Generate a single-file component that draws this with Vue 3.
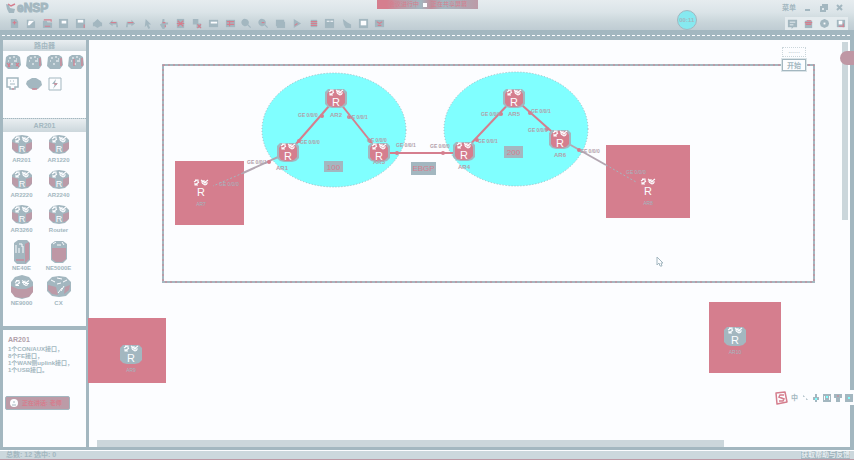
<script setup>
const tools = [
  { n: '新建', d: 'M2 1h6l2 3v7H2z', a: 'M4 5h4M6 3v4' },
  { n: '新建试卷', d: 'M2 2h7l2 2v7H2z', a: '' , w: 'M4 3h6L5 8H3z' },
  { n: '打开', d: 'M1 3h4l1 2h5v6H1z', a: 'M2 2h8v2M3 9h6' },
  { n: '保存', d: 'M1 1h10v10H1z', w: 'M4 3h5v3H4z' },
  { n: '另存为', d: 'M1 1h10v10H1z', w: 'M3 2h6v3H3z', a: 'M10 7v4' },
  { n: '打印', d: 'M6 1l4 4h1v4H9l-3 2-3-2H1V5h1z' },
  { n: '撤销', d: 'M1 6l4-4v2h5l1 6H9V7H5v2z', a: 'M3 5h6' },
  { n: '恢复', d: 'M11 6L7 2v2H2l-1 6h2V7h4v2z', a: 'M3 5h6' },
  { n: '选择', d: 'M4 1l6 6H7l2 4-2 1-2-4-2 2z' },
  { n: '拖动', d: 'M5 1h2v4h4v2H9l-2 5H5L2 7l2-1z', a: 'M5 5h3M8 8v2' },
  { n: '删除', d: 'M2 1h8v10H2z', a: 'M3 3l6 6M9 3L3 9M2 6h8' },
  { n: '删除连线', d: 'M2 1h6v5h3v5H6V7H2z', a: 'M7 7l4 4M11 7l-4 4' },
  { n: '文本', d: 'M1 2h10v8H1z', w: 'M3 4h7v2H3z' },
  { n: '调色板', d: 'M1 2h10v8H1z', a: 'M2 4h8M2 7h8M5 3v6' },
  { n: '放大', d: 'M5 1a4 4 0 013 6l3 3-1 1-3-3A4 4 0 115 1z' },
  { n: '缩小', d: 'M5 1a4 4 0 013 6l3 3-1 1-3-3A4 4 0 115 1z', a: 'M4 5h3' },
  { n: '重置缩放', d: 'M1 2h9v2h1v7H2V9H1z' },
  { n: '开启设备', d: 'M3 1l8 5-8 5z', a: 'M4 8l3-2' },
  { n: '停止设备', d: 'M3 2h7v8H3z', a: 'M3 4h7M3 6h7M3 8h7' },
  { n: '数据抓包', d: 'M1 1h10v10H1z', w: 'M3 3h3v1H3zM7 3h3v1H7z' },
  { n: '显示接口', d: 'M2 1l5 4 4 2v4H5L3 7z' },
  { n: '显示网格', d: 'M1 1h10v10H1z', w: 'M3 3h6v5H3z' },
  { n: '打开命令行', d: 'M1 2h10v8H1z', a: 'M3 4l3 2 3-2M4 8h4' }
]
const helpers = [
  { n: '论坛', d: 'M1 2h10v8H7l-2 2v-2H1z', w: 'M3 4h6v1H3zM3 7h4v1H3z' },
  { n: '官网', d: 'M2 3h8v8H2z', a: 'M2 5h8M4 3h5M3 7h6' },
  { n: '设置', d: 'M6 1l2 1 2 1 1 3-1 3-4 2-4-2-1-3 1-3 2-1z', w: 'M5 5h2v2H5z' },
  { n: '帮助', d: 'M2 2h9v8H2z', w: 'M4 3h4v4H4z', a: 'M4 9h6M9 6v4' }
]
const kinds = ['路由器', '交换机', '无线局域网', '防火墙']
const models = [
  ['AR201', 'router'], ['AR1220', 'router'], ['AR2220', 'router'], ['AR2240', 'router'],
  ['AR3260', 'router'], ['Router', 'router'], ['NE40E', 'chassis'], ['NE5000E', 'tower'],
  ['NE9000', 'drum'], ['CX', 'cx']
]
const zones = [
  [175, 161, 69, 64], [606, 145, 84, 73], [709, 302, 72, 71], [88, 318, 78, 65]
]
const links = [
  [289, 152, 336, 98], [336, 98, 379, 152], [379, 153, 464, 153],
  [464, 151, 514, 98], [514, 98, 560, 139]
]
const grayLinks = [[289, 152, 243, 173], [560, 139, 606, 165]]
const nodes = [
  [336, 98, 'AR2', 336, 117], [288, 152, 'AR1', 282, 170], [379, 152, 'AR3', 379, 164],
  [464, 151, 'AR4', 464, 169], [514, 98, 'AR5', 514, 116], [560, 139, 'AR6', 560, 157]
]
const bare = [[201, 188, 'AR7'], [648, 187, 'AR8']]
const idle = [[131, 354, 'AR9'], [735, 336, 'AR10']]
const ports = [
  [298, 117, 'GE 0/0/0'], [348, 119, 'GE 0/0/1'], [300, 144, 'GE 0/0/0'], [367, 142, 'GE 0/0/0'],
  [247, 164, 'GE 0/0/1'], [396, 147, 'GE 0/0/1'], [430, 148, 'GE 0/0/0'], [481, 116, 'GE 0/0/0'],
  [531, 113, 'GE 0/0/1'], [478, 143, 'GE 0/0/1'], [528, 132, 'GE 0/0/0'], [580, 153, 'GE 0/0/0']
]
const joints = [[322, 116], [349, 117], [299, 141], [370, 141], [269, 162], [397, 153], [443, 153], [501, 114], [530, 113], [477, 140], [547, 129], [579, 150]]
const tags = [[324, 161, 19, 11, '100'], [504, 146, 19, 12, '200'], [411, 162, 25, 13, 'EBGP']]
</script>

<template>
  <div class="app">
    <svg class="defs" aria-hidden="true">
      <symbol id="arrows" viewBox="0 0 16 7">
        <path d="M1 3l3-2M2 1h3v2M6 3l-4 3M2 4v2h3M8 1l3 2M8 3h3V1M15 1l-4 3M15 4h-4M9 4l3 2M14 5l-2 1" fill="none" stroke="#fcfdff" stroke-width="1.1" />
      </symbol>
      <symbol id="node" viewBox="0 0 22 20">
        <path d="M3 1h16l3 3v12l-3 3-4 1H7l-4-1-3-3V4z" fill="var(--edge)" />
        <path d="M4 3l4-1h6l4 1 2 3v9l-3 3-5 1H9l-5-1-2-3V6z" fill="var(--face)" />
        <use href="#arrows" x="3" y="1" width="16" height="7" />
      </symbol>
      <symbol id="router" viewBox="0 0 22 20">
        <path d="M1 5l4-4 6-1 6 1 4 4v9l-4 4-6 1-6-1-4-4z" fill="#a3b7c0" />
        <path d="M1 7l6 2v8l-4-1-2-3zM21 7l-6 2v8l4-1 2-3z" fill="#d57e8e" opacity=".48" />
        <use href="#arrows" x="3" y="1" width="16" height="7" />
      </symbol>
      <symbol id="chassis" viewBox="0 0 22 24">
        <path d="M3 3l4-3h9l3 3v17l-4 4H6l-3-3z" fill="#a3b7c0" />
        <path d="M14 4l4-2v17l-4 4zM5 19h8v2H5z" fill="#d57e8e" opacity=".55" />
        <path d="M5 5v8M8 4h3v3M8 8v5M12 6v7" fill="none" stroke="#fcfdff" />
      </symbol>
      <symbol id="tower" viewBox="0 0 22 24">
        <path d="M3 4l4-3h8l4 3v15l-4 4H7l-4-3z" fill="#a3b7c0" />
        <path d="M4 8h14v11l-4 3H8l-4-3z" fill="#d57e8e" opacity=".55" />
        <path d="M5 4l3-2M9 5h4M14 2l2 3" stroke="#fcfdff" />
      </symbol>
      <symbol id="drum" viewBox="0 0 22 24">
        <path d="M0 7l4-5 7-2 7 2 4 5v10l-4 5-7 2-7-2-4-5z" fill="#a3b7c0" />
        <path d="M0 11l7 3h8l7-3v6l-4 5-7 1-7-1-4-5z" fill="#d57e8e" opacity=".52" />
        <use href="#arrows" x="3" y="4" width="16" height="8" />
      </symbol>
      <symbol id="cx" viewBox="0 0 24 24">
        <path d="M0 7l5-5 7-1 7 1 5 5v9l-5 5-7 1-7-1-5-5z" fill="#a3b7c0" />
        <path d="M1 10l8 2 2 8-6-1-4-4zM23 10l-5 2-1 7 5-4z" fill="#d57e8e" opacity=".5" />
        <path d="M4 5l4 2M10 3l5 1M16 7l4-2M10 9l4-1M17 11l-3 5M15 13l-4 5" fill="none" stroke="#fcfdff" />
      </symbol>
      <symbol id="mini" viewBox="0 0 16 14">
        <path d="M1 2l3-2h8l3 2 1 8-3 4H3l-3-3z" fill="#a3b7c0" />
        <path d="M4 3h2M8 2h2M11 4h1M3 6h1M9 6h3M6 9h2" stroke="#fcfdff" />
      </symbol>
    </svg>

    <header class="head">
      <div class="title">
        <svg class="logo" viewBox="0 0 10 10"><path d="M0 1l3 1 1 3 5 1-1 4H3L1 6z" fill="#a3b7c0" /><path d="M2 1l3 2 4-2" fill="none" stroke="#d57e8e" stroke-width="1.5" /></svg>
        <span class="brand">eNSP</span>
        <div class="wins">
          <button class="menu">菜单</button>
          <button aria-label="最小化"><svg viewBox="0 0 8 8"><path d="M1 6h5" /></svg></button>
          <button aria-label="最大化"><svg viewBox="0 0 8 8"><path d="M1 3h4v4H1zM3 3V1h4v4H5" /></svg></button>
          <button aria-label="关闭"><svg viewBox="0 0 8 8"><path d="M1 1l5 5M6 1L1 6" /></svg></button>
        </div>
      </div>
      <div class="bar">
        <div class="tools">
          <button v-for="t in tools" :key="t.n" :aria-label="t.n">
            <svg viewBox="0 0 12 12"><path :d="t.d" fill="#a3b7c0" /><path v-if="t.w" :d="t.w" fill="#fcfdff" /><path v-if="t.a" :d="t.a" class="acc" /></svg>
          </button>
        </div>
        <div class="help">
          <button v-for="t in helpers" :key="t.n" :aria-label="t.n">
            <svg viewBox="0 0 12 12"><path :d="t.d" fill="#a3b7c0" /><path v-if="t.w" :d="t.w" fill="#fcfdff" /><path v-if="t.a" :d="t.a" class="acc" /></svg>
          </button>
        </div>
      </div>
      <div class="rule"></div>
      <div class="meeting"><span>会议进行中</span><b></b><span>正在共享屏幕</span></div>
      <div class="orb">00:11</div>
    </header>

    <div class="body">
      <aside class="side">
        <h2 class="cap">路由器</h2>
        <div class="kinds">
          <button v-for="(k, i) in kinds" :key="k" :aria-label="k">
            <svg viewBox="0 0 16 14"><use href="#mini" /><path v-if="i === 0" d="M2 8l3 4M5 8l-2 4M11 8l3 4M14 8l-3 3" class="acc" /><path v-else-if="i === 3" d="M6 4v7M14 3v8" class="acc" /><path v-else d="M14 3v8" class="acc" /></svg>
          </button>
          <button aria-label="终端"><svg viewBox="0 0 16 14"><path d="M2 1h11v9h-3v2H5v-2H2z" fill="none" stroke="#a3b7c0" stroke-width="1.5" /><path d="M5 4h1M8 4h1M5 7h5" stroke="#a3b7c0" /><path d="M7 12h2" class="acc" /></svg></button>
          <button aria-label="其他设备"><svg viewBox="0 0 16 14"><path d="M1 4l5-3h4l5 3 1 4-4 4-4 1-5-2-3-4z" fill="#a3b7c0" /><path d="M6 12h5" class="acc" /></svg></button>
          <button aria-label="设备连线"><svg viewBox="0 0 16 14"><path d="M2 1h12v12H2z" fill="#fcfdff" stroke="#a3b7c0" /><path d="M9 2L5 7h3l-2 5 5-6H8z" fill="#a3b7c0" /><path d="M7 7h3" class="acc" /></svg></button>
        </div>
        <h3 class="cap sub">AR201</h3>
        <div class="models">
          <button v-for="m in models" :key="m[0]" :class="{ tall: m[1] !== 'router' }">
            <svg v-if="m[1] === 'router'" viewBox="0 0 22 20"><use href="#router" width="22" height="20" /><text x="11" y="17" class="mark">R</text></svg>
            <svg v-else><use :href="'#' + m[1]" /></svg>
            <span>{{ m[0] }}</span>
          </button>
        </div>
        <section class="info">
          <h4>AR201</h4>
          <p>1个CON/AUX接口，</p>
          <p>8个FE接口，</p>
          <p>1个WAN侧uplink接口，</p>
          <p>1个USB接口。</p>
          <div class="talk"><svg viewBox="0 0 8 8"><circle cx="4" cy="4" r="4" fill="#fcfdff" /><path d="M2 6h4M3 3h2" stroke="#a3b7c0" /></svg><span>正在讲话: 老师</span></div>
        </section>
      </aside>

      <main class="stage">
        <svg class="topo" width="755" height="400" viewBox="89 40 755 400">
          <rect x="163" y="65" width="651" height="217" class="frame" />
          <rect x="163" y="65" width="651" height="217" class="dots" />
          <ellipse cx="334" cy="130" rx="72" ry="57" class="area" />
          <ellipse cx="516" cy="129" rx="72" ry="57" class="area" />
          <rect v-for="z in zones" :key="z[0]" :x="z[0]" :y="z[1]" :width="z[2]" :height="z[3]" fill="#d57e8e" />
          <line v-for="(l, i) in links" :key="'l' + i" :x1="l[0]" :y1="l[1]" :x2="l[2]" :y2="l[3]" class="link" />
          <line v-for="(l, i) in grayLinks" :key="'g' + i" :x1="l[0]" :y1="l[1]" :x2="l[2]" :y2="l[3]" class="link gray" />
          <path d="M243 173l-30 13M606 165l30 17" class="faint" />
          <circle v-for="(j, i) in joints" :key="'j' + i" :cx="j[0]" :cy="j[1]" r="2" fill="#d57e8e" />
          <g v-for="n in nodes" :key="n[2]" class="on">
            <use href="#node" :x="n[0] - 11" :y="n[1] - 10" width="22" height="20" />
            <text :x="n[0]" :y="n[1] + 8" class="r">R</text>
            <text :x="n[3]" :y="n[4]" class="name">{{ n[2] }}</text>
          </g>
          <g v-for="n in bare" :key="n[2]">
            <use href="#arrows" :x="n[0] - 8" :y="n[1] - 9" width="16" height="7" />
            <text :x="n[0]" :y="n[1] + 8" class="r">R</text>
            <text :x="n[0]" :y="n[1] + 18" class="dim">{{ n[2] }}</text>
          </g>
          <g v-for="n in idle" :key="n[2]" class="off">
            <use href="#node" :x="n[0] - 11" :y="n[1] - 10" width="22" height="20" />
            <text :x="n[0]" :y="n[1] + 8" class="r">R</text>
            <text :x="n[0]" :y="n[1] + 18" class="dim">{{ n[2] }}</text>
          </g>
          <text v-for="(p, i) in ports" :key="'p' + i" :x="p[0]" :y="p[1]" class="port">{{ p[2] }}</text>
          <text x="219" y="186" class="port thin">GE 0/0/0</text>
          <text x="626" y="174" class="port thin">GE 0/0/0</text>
          <g v-for="t in tags" :key="t[4]">
            <rect :x="t[0]" :y="t[1]" :width="t[2]" :height="t[3]" fill="#a3b7c0" />
            <text :x="t[0] + t[2] / 2" :y="t[1] + 9" class="tag">{{ t[4] }}</text>
          </g>
          <path d="M657 257v8l2-2 1 3h2l-1-3h2z" fill="#fcfdff" stroke="#a3b7c0" />
        </svg>
        <div class="vbar"></div>
        <div class="hbar"><div class="thumb"></div></div>
        <div class="start"><span>......</span><button>开始</button></div>
        <div class="red"></div>
        <div class="ime">
          <svg class="s" viewBox="0 0 14 14"><path d="M2 2l9-1 2 10-10 2z" fill="#fcfdff" stroke="#d57e8e" stroke-width="1.5" stroke-linejoin="round" /><path d="M10 4H6L5 6l5 2-1 2H5" fill="none" stroke="#d57e8e" stroke-width="1.5" /></svg>
          <span>中</span>
          <svg viewBox="0 0 8 8"><path d="M2 2h1v1M5 5h1v1" class="fine" /></svg>
          <svg viewBox="0 0 8 8"><path d="M4 0v5M2 3v2h4V3M4 5v3" /><path d="M4 4v2" class="cy" /></svg>
          <svg viewBox="0 0 8 8"><path d="M0 1h8v6H0zM2 3h1M5 3h1M2 5h4" /><path d="M4 2v2" class="cy" /></svg>
          <svg viewBox="0 0 8 8"><path d="M1 1h6v2H5v4H3V3H1z" /><path d="M3 2h2" class="acc" /></svg>
          <svg viewBox="0 0 8 8"><path d="M1 1h2v2H1zM5 1h2v2H5zM1 5h2v2H1zM5 5h2v2H5z" /><path d="M3 4h2" class="cy" /></svg>
        </div>
      </main>
    </div>
    <footer class="status"><span>总数: 12 选中: 0</span><a href="#">获取帮助与反馈</a></footer>
  </div>
</template>

<style>
body { margin: 0; overflow: hidden; }
</style>
<style scoped>
.app { --g: #a3b7c0; --p: #d57e8e; --w: #fcfdff; --c: #80ffff; height: 100vh; display: flex; flex-direction: column; background: var(--w); color: var(--g); font-family: "Liberation Sans", "Noto Sans CJK SC", sans-serif; font-size: 7px; line-height: 7px; overflow: hidden; }
.app *, .app { box-sizing: border-box; }
.defs { position: absolute; width: 0; height: 0; }
button { border: 0; padding: 0; margin: 0; background: none; color: inherit; font: inherit; display: block; }
svg { display: block; }
h2, h3, h4, p { margin: 0; font: inherit; }
.acc { fill: none; stroke: #d57e8e; stroke-width: 1.2; }
.head { position: relative; flex: none; height: 40px; display: flex; flex-direction: column; background: linear-gradient(#e6ecef, #dbe4e8 12px, #c9d5da 22px, #bfccd3 30px); }
.title { display: flex; align-items: center; height: 15px; padding: 0 10px 0 6px; }
.logo { width: 10px; height: 10px; }
.brand { font-size: 12px; line-height: 14px; font-weight: bold; margin-left: 1px; -webkit-text-stroke: 1px var(--g); }
.wins { margin-left: auto; display: flex; align-items: center; gap: 8px; height: 9px; }
.wins svg { width: 8px; height: 8px; fill: none; stroke: var(--g); stroke-width: 2; }
.wins .menu { font-weight: bold; }
.bar { display: flex; justify-content: space-between; align-items: center; height: 17px; padding: 0 6px 0 8px; }
.tools { display: flex; justify-content: space-between; width: 45%; margin-top: -1px; }
.tools svg, .help svg { width: 11px; height: 11px; }
.tools button { width: 12px; height: 12px; display: grid; place-items: center; }
.help { display: flex; gap: 5px; padding: 1px 2px; background: #e4ebee; }
.rule { flex: 1; background: var(--g); display: flex; align-items: center; margin-top: -2px; }
.rule::after { content: ""; flex: 1; margin-left: 2px; margin-right: 4px; border-top: 1px dashed var(--w); }
.meeting { position: absolute; left: 44.15%; top: 0; width: 101px; height: 9px; display: flex; align-items: center; gap: 4px; padding: 0 12px; background: linear-gradient(90deg, var(--p) 10px, #bc9ba7 24px, var(--g) 44px, #c08f9c 54px, var(--g) 66px, #bc9ba7); color: var(--p); font-size: 6px; white-space: nowrap; }
.meeting b { width: 4px; height: 4px; background: var(--w); flex: none; }
.orb { position: absolute; left: 79.25%; top: 10px; width: 20px; height: 20px; border-radius: 50%; border: 1px solid var(--g); background: #86e9f0; color: var(--g); font-size: 6px; font-weight: bold; line-height: 18px; text-align: center; }
.body { flex: 1; min-height: 0; display: flex; }
.side { flex: none; width: 89px; border-left: 3px solid var(--g); border-right: 3px solid var(--g); border-bottom: 3px solid var(--g); display: flex; flex-direction: column; }
.cap { height: 11px; line-height: 11px; text-align: center; background: linear-gradient(#e9eef1, #ccd7dc); font-weight: bold; flex: none; }
.cap.sub { height: 14px; line-height: 14px; border-top: 1px dotted var(--g); }
.kinds { display: grid; grid-template-columns: repeat(4, 16px); column-gap: 5px; row-gap: 8px; height: 67px; align-content: start; padding: 4px 2px; flex: none; }
.kinds svg { width: 16px; height: 14px; }
.models { flex: 1; display: grid; grid-template-columns: 37px 37px; grid-auto-rows: min-content; padding-top: 3px; font-size: 6px; font-weight: bold; line-height: 7px; }
.models button { height: 35px; display: flex; flex-direction: column; align-items: center; justify-content: flex-start; }
.models svg { width: 22px; height: 20px; margin-bottom: 2px; flex: none; }
.models .tall svg { width: 24px; height: 24px; margin-bottom: 1px; }
.mark { font-size: 9px; font-weight: normal; fill: #fcfdff; text-anchor: middle; }
.info { flex: none; height: 121px; border-top: 4px solid var(--g); padding: 6px 4px 0 5px; white-space: nowrap; font-weight: bold; font-size: 6px; }
.info h4 { color: #b19faa; font-size: 7px; font-weight: bold; margin-bottom: 3px; }
.info p { height: 7px; }
.talk { margin: 22px 0 0 -3px; width: 65px; height: 14px; display: flex; align-items: center; gap: 4px; padding-left: 4px; border: 1px solid var(--g); border-radius: 2px; background: #bc9ba7; color: var(--p); }
.talk svg { width: 8px; height: 8px; }
.stage { position: relative; flex: 1; min-width: 0; display: grid; grid-template-columns: minmax(0, 1fr) 8px; grid-template-rows: minmax(0, 1fr) 7px; border-right: 4px solid var(--g); border-bottom: 3px solid var(--g); }
.topo { grid-area: 1 / 1 / 2 / 3; overflow: visible; }
.vbar { grid-area: 1 / 2 / 2 / 3; margin: 2px 2px 220px 0; background: #cbd6db; }
.hbar { grid-area: 2 / 1 / 3 / 3; padding: 0 126px 0 8px; }
.thumb { height: 7px; background: #cbd6db; }
.frame { fill: none; stroke: #a3b7c0; stroke-width: 2; }
.dots { fill: none; stroke: #d57e8e; stroke-width: 1; stroke-dasharray: 2 3; }
.area { fill: #80ffff; stroke: #a3b7c0; stroke-width: 1; stroke-dasharray: 1 2; }
.link { stroke: #d57e8e; stroke-width: 2; }
.gray { stroke: #b3a7b2; stroke-width: 2; }
.faint { fill: none; stroke: #a3b7c0; stroke-width: 1; stroke-dasharray: 2 2; }
.on { --edge: #a3b7c0; --face: #d57e8e; }
.off { --edge: #a3b7c0; --face: #a3b7c0; }
.name, .port { font-size: 6px; font-weight: bold; fill: #b19faa; }
.name { text-anchor: middle; }
.port { font-size: 5px; }
.port.thin { font-weight: normal; fill: #a3b7c0; }
.r { font-size: 11px; fill: #fcfdff; text-anchor: middle; }
.dim { font-size: 5px; fill: #a3b7c0; text-anchor: middle; }
.tag { font-size: 8px; fill: #d57e8e; text-anchor: middle; }
.start { position: absolute; right: 44px; top: 7px; width: 24px; display: flex; flex-direction: column; gap: 2px; text-align: center; }
.start span { height: 10px; border: 1px dotted #cbd6db; line-height: 6px; }
.start button { height: 12px; border: 1px solid var(--g); box-shadow: 0 0 0 1px #dbe4e8; background: var(--w); font-weight: bold; }
.red { position: absolute; right: -4px; top: 11px; width: 14px; height: 14px; border-radius: 7px 0 0 7px; background: #bf97a4; }
.ime { position: absolute; right: -4px; top: 350px; width: 80px; height: 15px; display: flex; align-items: center; gap: 3px; background: var(--w); font-weight: bold; }
.ime svg { width: 8px; height: 8px; fill: none; stroke: var(--g); stroke-width: 2; flex: none; }
.ime .s { width: 14px; height: 14px; }
.ime .fine { stroke-width: 1; }
.ime .cy { stroke: var(--c); }
.ime .acc { stroke: var(--p); }
.ime span { flex: none; }
.status { flex: none; height: 10px; display: flex; justify-content: space-between; align-items: center; padding: 0 4px 0 6px; background: #ccd8dd; border-top: 1px solid var(--w); border-bottom: 1px solid #bd99a5; font-weight: bold; line-height: 8px; }
.status a { color: #e4ebee; background: var(--g); text-decoration: none; }
</style>
